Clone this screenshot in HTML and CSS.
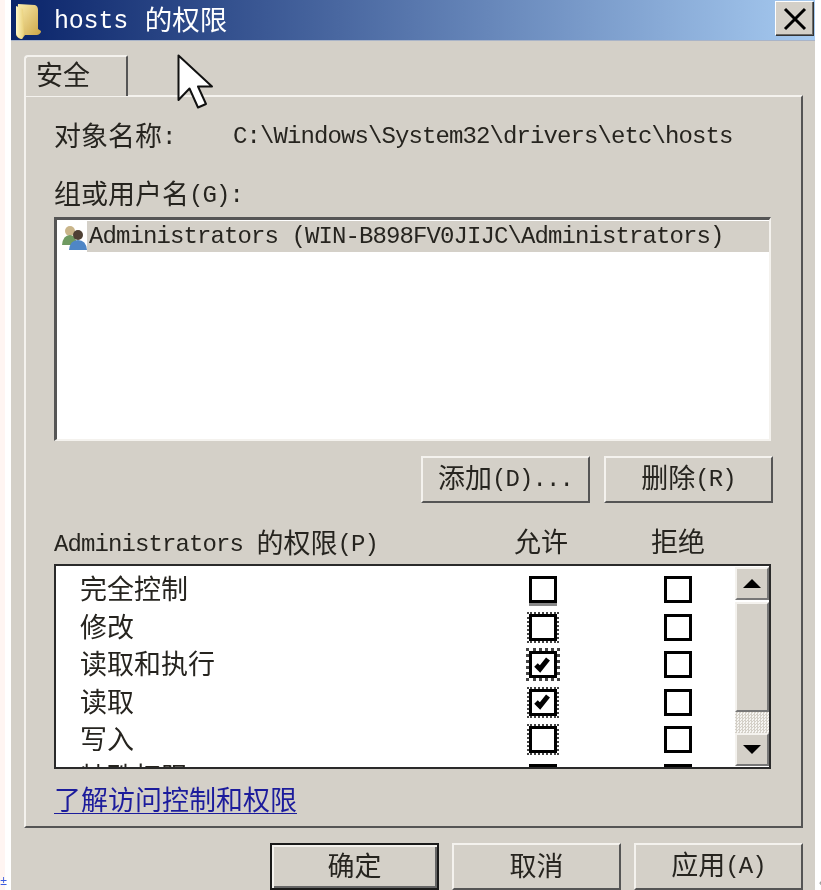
FILE: index.html
```html
<!DOCTYPE html>
<html lang="zh-CN">
<head>
<meta charset="utf-8">
<title>hosts 的权限</title>
<link rel="stylesheet" href="styles.css">
</head>
<body>
<div class="strip"><span class="strip-mark">±</span></div>
<div class="window">
  <header class="titlebar">
    <svg class="folder" width="26" height="36" viewBox="0 0 26 36">
      <defs>
        <linearGradient id="fg" x1="0" y1="0" x2="1" y2="1"><stop offset="0" stop-color="#fbeeb0"/><stop offset="1" stop-color="#c9a140"/></linearGradient>
        <linearGradient id="ff" x1="0" y1="0" x2="1" y2="0"><stop offset="0" stop-color="#fff7c8"/><stop offset="1" stop-color="#e8cf78"/></linearGradient>
      </defs>
      <path d="M3 1 L20 2 Q23 3 23 7 L23 26 L26 28 Q26 31 22 32 L10 32 L7 36 Q3 36 1 32 Z" fill="url(#fg)"/>
      <path d="M1 3 L8 6 L9 31 L7 36 Q2 35 1 30 Z" fill="url(#ff)"/>
    </svg>
    <div class="title"><span class="t-en">hosts </span><span class="t-zh">的权限</span></div>
    <button class="close"><svg width="26" height="26" viewBox="0 0 26 26"><path d="M3 3 L23 23 M23 3 L3 23" stroke="#000" stroke-width="3"/></svg></button>
  </header>

  <div class="tabs"><div class="tab"><span class="z">安全</span></div></div>

  <section class="panel">
    <div class="line path-row"><span class="mix path-label"><span class="z">对象名称</span>:</span><span>C:\Windows\System32\drivers\etc\hosts</span></div>
    <div class="line group-label"><span class="mix"><span class="z">组或用户名</span>(G):</span></div>
    <div class="userlist">
      <div class="user">
        <svg class="usericon" width="25" height="25" viewBox="0 0 25 25">
          <circle cx="8" cy="6" r="5" fill="#c9b58a"/><path d="M0 20 Q1 10 8 10 Q14 10 15 20 Z" fill="#6f9a62"/>
          <circle cx="16" cy="10" r="5" fill="#4e4034"/><path d="M7 25 Q8 15 16 15 Q24 15 25 25 Z" fill="#4f86c6"/>
        </svg>
        <span class="user-name">Administrators (WIN-B898FV0JIJC\Administrators)</span>
      </div>
    </div>
    <div class="list-actions">
      <button class="btn"><span class="mix btn-mix"><span class="z">添加</span>(D)...</span></button>
      <button class="btn"><span class="mix btn-mix"><span class="z">删除</span>(R)</span></button>
    </div>
    <div class="line perm-head">
      <span class="mix perm-title">Administrators <span class="z">的权限</span>(P)</span>
      <span class="perm-col"><span class="z">允许</span></span>
      <span class="perm-col"><span class="z">拒绝</span></span>
    </div>
    <div class="permlist">
      <div class="rows">
        <div class="row"><span><span class="z">完全控制</span></span><span class="cell"><i class="box focus-bottom"></i></span><span class="cell"><i class="box"></i></span></div>
        <div class="row"><span><span class="z">修改</span></span><span class="cell"><i class="box focus"></i></span><span class="cell"><i class="box"></i></span></div>
        <div class="row"><span><span class="z">读取和执行</span></span><span class="cell"><i class="box focus strong"><svg width="22" height="20" viewBox="0 0 22 20"><path d="M4 10 L8 14 L16 4" fill="none" stroke="#000" stroke-width="5"/></svg></i></span><span class="cell"><i class="box"></i></span></div>
        <div class="row"><span><span class="z">读取</span></span><span class="cell"><i class="box focus"><svg width="22" height="20" viewBox="0 0 22 20"><path d="M4 10 L8 14 L16 4" fill="none" stroke="#000" stroke-width="5"/></svg></i></span><span class="cell"><i class="box"></i></span></div>
        <div class="row"><span><span class="z">写入</span></span><span class="cell"><i class="box focus"></i></span><span class="cell"><i class="box"></i></span></div>
        <div class="row"><span><span class="z">特殊权限</span></span><span class="cell"><i class="box"></i></span><span class="cell"><i class="box"></i></span></div>
      </div>
      <div class="scrollbar">
        <div class="sb-btn"><i class="arrow-up"></i></div>
        <div class="sb-thumb"></div>
        <div class="sb-track"></div>
        <div class="sb-btn sb-down"><i class="arrow-down"></i></div>
      </div>
    </div>
    <a class="line help" href="#"><span class="z">了解访问控制和权限</span></a>
  </section>

  <footer class="footer">
    <button class="btn btn-default"><span class="z foot-z">确定</span></button>
    <button class="btn btn-wide"><span class="z foot-z">取消</span></button>
    <button class="btn btn-wide"><span class="mix btn-mix"><span class="z">应用</span>(A)</span></button>
  </footer>
</div>
<div class="edge"><span class="edge-mark">‹</span></div>

<svg class="cursor" width="38" height="58" viewBox="0 0 38 58">
  <path d="M1.5 1.5 L1.5 46 L12.5 34.5 L21 53.5 L29 50 L21 32.5 L35 32.5 Z" fill="#fff" stroke="#111" stroke-width="2" stroke-linejoin="round"/>
</svg>
</body>
</html>
```

FILE: styles.css
```css
html, body {
  margin: 0;
  height: 890px;
  overflow: hidden;
  background: #fff;
}
body {
  display: flex;
  font-family: "Liberation Mono", "DejaVu Sans Mono", monospace;
  font-size: 24px;
  letter-spacing: -0.9px;
  color: #26241f;
  position: relative;
  filter: blur(0.4px);
}
.z {
  font-family: "Noto Sans CJK SC", sans-serif;
  font-size: 27px;
  line-height: 28px;
  letter-spacing: 0;
  vertical-align: 1px;
}
.mix {
  line-height: 28px;
}
.mix .z { vertical-align: -2px; }
.btn-mix { margin-bottom: 2px; }
.foot-z { margin-bottom: 4px; }
.perm-col .z { vertical-align: 0; }
.row .z { vertical-align: -1px; }
.strip {
  width: 5px;
  margin-right: 6px;
  background: #fff5f2;
  position: relative;
}
.strip-mark {
  position: absolute;
  left: 0;
  bottom: 2px;
  font-size: 12px;
  line-height: 12px;
  color: #3a5be0;
}
.edge {
  flex: 1;
  position: relative;
}
.edge-mark {
  position: absolute;
  left: 2px;
  bottom: 0;
  font-size: 14px;
  line-height: 14px;
  color: #999;
}
.window {
  width: 804px;
  height: 890px;
  flex: none;
  background: #d4d0c8;
  display: flex;
  flex-direction: column;
}
.titlebar {
  height: 41px;
  flex: none;
  display: flex;
  align-items: center;
  background: linear-gradient(90deg, #0a246a 0%, #a6caf0 100%);
  border-bottom: 1px solid #a9b4c8;
  box-sizing: border-box;
  padding: 0 2px 0 4px;
}
.folder { margin-top: 1px; }
.title {
  margin-left: 13px;
  margin-top: 2px;
  color: #fff;
  flex: 1;
  line-height: 38px;
}
.t-en {
  font-size: 25px;
  letter-spacing: -0.2px;
  white-space: pre;
  vertical-align: 2px;
}
.t-zh {
  font-family: "Noto Sans CJK SC", sans-serif;
  font-size: 27.5px;
  letter-spacing: 0;
  margin-left: 2px;
}
.close {
  width: 38px;
  height: 34px;
  padding: 0;
  margin-bottom: 4px;
  display: flex;
  align-items: center;
  justify-content: center;
  background: #d4d0c8;
  border: none;
  border-top: 1px solid #fff;
  border-left: 1px solid #fff;
  box-shadow: inset -1px -1px 0 #6e6c68, 1px 1px 0 #333;
}
.tabs {
  height: 54px;
  flex: none;
  box-sizing: border-box;
  padding: 14px 0 0 13px;
}
.tab {
  width: 104px;
  height: 41px;
  box-sizing: border-box;
  border: 2px solid #f4f2ee;
  border-right: 2px solid #555;
  border-bottom: none;
  border-radius: 4px 2px 0 0;
  padding: 3px 0 0 10px;
  background: #d4d0c8;
  position: relative;
  z-index: 1;
}
.panel {
  width: 779px;
  height: 733px;
  margin-left: 13px;
  flex: none;
  box-sizing: border-box;
  border-top: 2px solid #f4f2ee;
  border-left: 2px solid #f4f2ee;
  border-right: 2px solid #555;
  border-bottom: 2px solid #555;
  padding: 25px 0 0 28px;
}
.line {
  display: flex;
  align-items: center;
  height: 28px;
  white-space: pre;
}
.path-label { width: 179px; }
.group-label { margin-top: 30px; }
.userlist {
  width: 717px;
  height: 224px;
  margin-top: 9px;
  box-sizing: border-box;
  background: #fff;
  border-top: 3px solid #555;
  border-left: 3px solid #555;
  border-right: 2px solid #f4f2ee;
  border-bottom: 2px solid #f4f2ee;
  padding-top: 1px;
}
.user {
  display: flex;
  align-items: center;
  height: 31px;
  padding-left: 5px;
}
.usericon { flex: none; margin-top: 1px; }
.user-name {
  flex: 1;
  height: 31px;
  line-height: 32px;
  background: #d4d0c8;
  white-space: pre;
  padding-left: 2px;
}
.list-actions {
  display: flex;
  gap: 14px;
  justify-content: flex-end;
  width: 719px;
  margin-top: 15px;
}
.btn {
  width: 169px;
  height: 47px;
  padding: 0;
  flex: none;
  display: flex;
  align-items: center;
  justify-content: center;
  font: inherit;
  letter-spacing: inherit;
  color: inherit;
  background: #d4d0c8;
  box-sizing: border-box;
  border: 2px solid;
  border-color: #f4f2ee #555 #555 #f4f2ee;
}
.perm-head { margin-top: 26px; }
.perm-title { width: 460px; }
.perm-col { width: 137px; }
.perm-head .perm-col:last-child { width: auto; }
.permlist {
  width: 717px;
  height: 205px;
  margin-top: 7px;
  box-sizing: border-box;
  border: 2px solid #2a2a2a;
  background: #fff;
  display: flex;
  overflow: hidden;
}
.rows {
  flex: 1;
  padding-top: 5px;
  overflow: hidden;
}
.row {
  height: 37.5px;
  display: grid;
  grid-template-columns: 449px 135px 60px;
  padding-left: 24px;
  align-items: center;
}
.cell { display: flex; }
.box {
  display: flex;
  align-items: center;
  justify-content: center;
  width: 28px;
  height: 27px;
  box-sizing: border-box;
  border: 3px solid #000;
  background: #fff;
}
.focus { outline: 2px dotted #444; }
.strong { outline-width: 3px; }
.focus-bottom { box-shadow: 0 3px 0 #888; }
.scrollbar {
  width: 34px;
  flex: none;
  display: flex;
  flex-direction: column;
  padding-top: 1px;
}
.sb-btn {
  height: 33px;
  flex: none;
  display: flex;
  align-items: center;
  justify-content: center;
  background: #d4d0c8;
  box-sizing: border-box;
  border: 2px solid;
  border-color: #f4f2ee #777 #777 #f4f2ee;
}
.sb-thumb {
  height: 110px;
  flex: none;
  margin-top: 2px;
  background: #d4d0c8;
  box-sizing: border-box;
  border: 2px solid;
  border-color: #f4f2ee #777 #777 #f4f2ee;
}
.sb-track {
  flex: 1;
  background: repeating-conic-gradient(#d4d0c8 0 25%, #f6f5f2 0 50%) 0 0 / 3px 3px;
}
.sb-down { margin-bottom: 1px; }
.arrow-up, .arrow-down {
  width: 0;
  height: 0;
  border-left: 9px solid transparent;
  border-right: 9px solid transparent;
}
.arrow-up { border-bottom: 9px solid #000; }
.arrow-down { border-top: 9px solid #000; }
.help {
  margin-top: 15px;
  height: 29px;
  width: 243px;
  color: #1c1c9c;
  text-decoration: none;
  border-bottom: 1px solid #1c1c9c;
}
.footer {
  display: flex;
  justify-content: flex-end;
  gap: 13px;
  width: 792px;
  margin-top: 15px;
}
.btn-default {
  width: 169px;
  border: 2px solid #1a1a1a;
  box-shadow: inset 2px 2px 0 #f4f2ee, inset -2px -2px 0 #666;
}
.btn-wide { width: 169px; }
.cursor {
  position: absolute;
  left: 177px;
  top: 54px;
}
```
